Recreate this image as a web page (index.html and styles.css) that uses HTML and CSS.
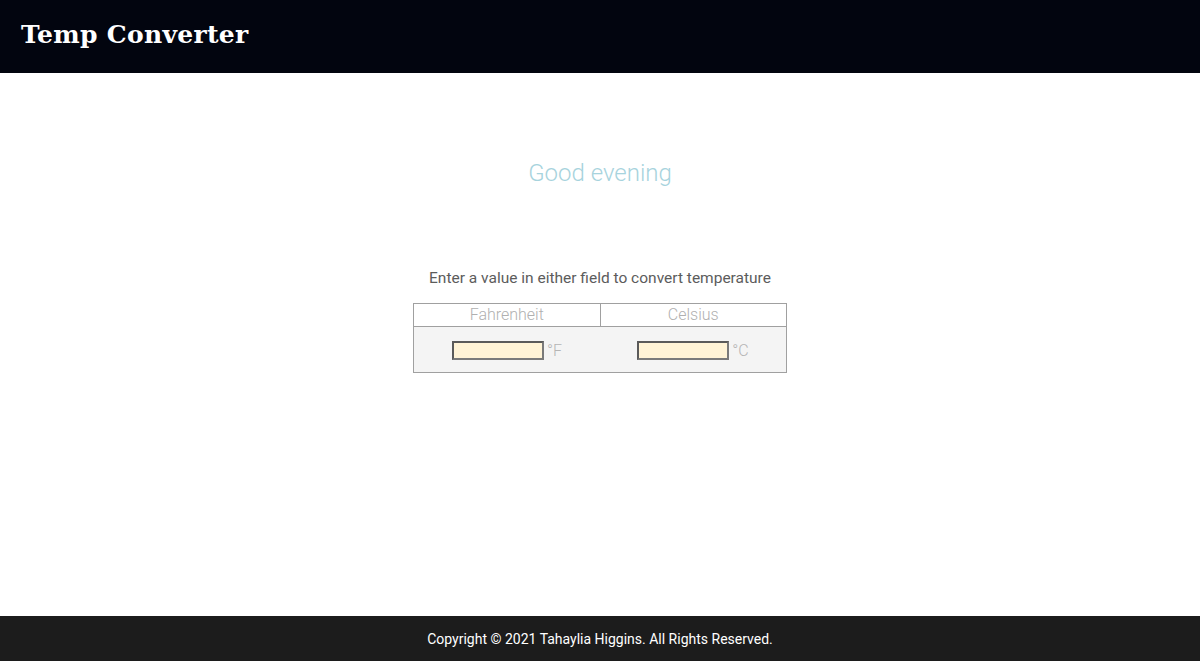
FILE: index.html
```html
<!DOCTYPE html>
<html lang="en">
<head>
<meta charset="utf-8">
<title>Temp Converter</title>
<link rel="stylesheet" href="styles.css">
</head>
<body>
<header class="site-header">
  <h1 class="brand">Temp Converter</h1>
</header>
<main class="content">
  <h2 class="greeting">Good evening</h2>
  <p class="instructions">Enter a value in either field to convert temperature</p>
  <table class="converter">
    <thead>
      <tr><th>Fahrenheit</th><th>Celsius</th></tr>
    </thead>
    <tbody>
      <tr>
        <td><input class="temp-input" type="text"><span class="unit">°F</span></td>
        <td><input class="temp-input" type="text"><span class="unit">°C</span></td>
      </tr>
    </tbody>
  </table>
</main>
<footer class="site-footer">
  <p>Copyright © 2021 Tahaylia Higgins. All Rights Reserved.</p>
</footer>
</body>
</html>
```
FILE: styles.css
```css
* { box-sizing: border-box; }
html, body { height: 100%; }
body {
  margin: 0;
  font-family: Roboto, "Noto Sans", sans-serif;
  background: #fff;
  display: flex;
  flex-direction: column;
  min-height: 661px;
}
.site-header {
  background: #02050f;
  height: 73px;
  display: flex;
  align-items: center;
  padding: 0 21px;
}
.brand {
  margin: 0;
  color: #fff;
  font-family: "DejaVu Serif", "Liberation Serif", serif;
  font-weight: bold;
  font-size: 25px;
  letter-spacing: 0.3px;
  position: relative;
  top: -2px;
}
.content {
  flex: 1;
  display: flex;
  flex-direction: column;
  align-items: center;
  padding-top: 84px;
}
.greeting {
  margin: 0;
  font-weight: 300;
  font-size: 24px;
  color: #a7d3dd;
  line-height: 32px;
}
.instructions {
  margin: 79px 0 0;
  font-size: 15.5px;
  color: #5c5c5c;
  line-height: 20px;
}
.converter {
  margin-top: 15px;
  width: 374px;
  border-collapse: collapse;
  border: 1px solid #a0a0a0;
}
.converter th {
  width: 50%;
  border: 1px solid #a0a0a0;
  font-weight: 300;
  font-size: 16px;
  color: #b0b0b0;
  height: 23px;
  padding: 0;
  line-height: 20px;
}
.converter td {
  background: #f4f4f4;
  height: 46px;
  padding: 0;
  text-align: center;
  vertical-align: middle;
}
.temp-input {
  width: 92px;
  height: 19px;
  border: 2px solid #5a5a5a;
  border-color: #5a5a5a #7a7a7a #7a7a7a #5a5a5a;
  background: #fff3d6;
  vertical-align: middle;
  padding: 0;
  margin: 0;
}
.unit {
  display: inline-block;
  margin-left: 3px;
  font-weight: 300;
  font-size: 16px;
  color: #b5b5b5;
  vertical-align: middle;
}
.site-footer {
  background: #1c1c1c;
  height: 45px;
  display: flex;
  align-items: center;
  justify-content: center;
}
.site-footer p {
  margin: 0;
  color: #fff;
  font-size: 14px;
}
```
